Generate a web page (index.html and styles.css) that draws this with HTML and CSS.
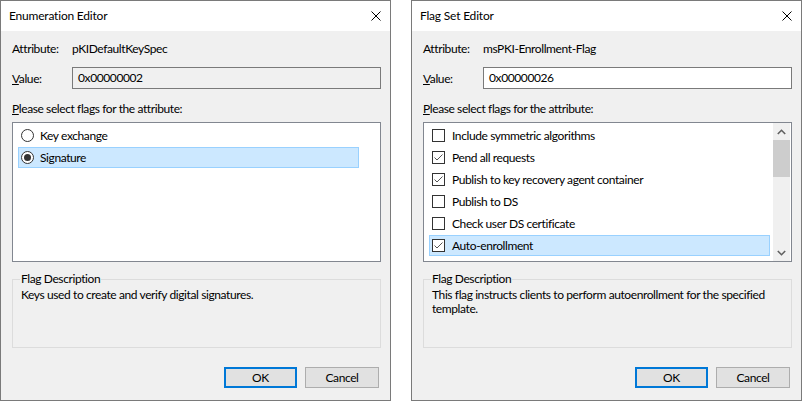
FILE: index.html
```html
<!DOCTYPE html>
<html>
<head>
<meta charset="utf-8">
<link rel="stylesheet" href="styles.css">
</head>
<body>
<div class="screen">
  <div class="dialog">
    <div class="titlebar">
      <span class="title">Enumeration Editor</span>
      <svg class="close" width="10" height="10" viewBox="0 0 10 10"><path d="M0.5 0.5 L9.5 9.5 M9.5 0.5 L0.5 9.5" stroke="#000" stroke-width="1" fill="none"/></svg>
    </div>
    <div class="body">
      <div class="attr"><span class="lbl">Attribute:</span><span>pKIDefaultKeySpec</span></div>
      <div class="value"><span class="lbl"><u>V</u>alue:</span><div class="input readonly">0x00000002</div></div>
      <div class="prompt"><u>P</u>lease select flags for the attribute:</div>
      <div class="list">
        <div class="items wide">
          <div class="item"><span class="radio"></span><span class="txt">Key exchange</span></div>
          <div class="item selected"><span class="radio checked"></span><span class="txt">Signature</span></div>
        </div>
      </div>
      <div class="group">
        <span class="legend">Flag Description</span>
        <p class="desc">Keys used to create and verify digital signatures.</p>
      </div>
      <div class="buttons">
        <button class="btn ok">OK</button>
        <button class="btn cancel">Cancel</button>
      </div>
    </div>
  </div>

  <div class="dialog">
    <div class="titlebar">
      <span class="title">Flag Set Editor</span>
      <svg class="close" width="10" height="10" viewBox="0 0 10 10"><path d="M0.5 0.5 L9.5 9.5 M9.5 0.5 L0.5 9.5" stroke="#000" stroke-width="1" fill="none"/></svg>
    </div>
    <div class="body">
      <div class="attr"><span class="lbl">Attribute:</span><span>msPKI-Enrollment-Flag</span></div>
      <div class="value"><span class="lbl"><u>V</u>alue:</span><div class="input">0x00000026</div></div>
      <div class="prompt"><u>P</u>lease select flags for the attribute:</div>
      <div class="list">
        <div class="items">
          <div class="item"><span class="check"></span><span class="txt cb">Include symmetric algorithms</span></div>
          <div class="item"><span class="check on"><svg width="11" height="11" viewBox="0 0 11 11"><path d="M1.5 5.5 L4 8 L9.5 2.5" stroke="#555" stroke-width="1" fill="none"/></svg></span><span class="txt cb">Pend all requests</span></div>
          <div class="item"><span class="check on"><svg width="11" height="11" viewBox="0 0 11 11"><path d="M1.5 5.5 L4 8 L9.5 2.5" stroke="#555" stroke-width="1" fill="none"/></svg></span><span class="txt cb">Publish to key recovery agent container</span></div>
          <div class="item"><span class="check"></span><span class="txt cb">Publish to DS</span></div>
          <div class="item"><span class="check"></span><span class="txt cb">Check user DS certificate</span></div>
          <div class="item selected"><span class="check on"><svg width="11" height="11" viewBox="0 0 11 11"><path d="M1.5 5.5 L4 8 L9.5 2.5" stroke="#555" stroke-width="1" fill="none"/></svg></span><span class="txt cb">Auto-enrollment</span></div>
        </div>
        <div class="scroll">
          <div class="arrow"><svg width="9" height="6" viewBox="0 0 9 6"><path d="M0.8 5 L4.5 1.3 L8.2 5" stroke="#606060" stroke-width="1.6" fill="none"/></svg></div>
          <div class="thumb"></div>
          <div class="track"></div>
          <div class="arrow"><svg width="9" height="6" viewBox="0 0 9 6"><path d="M0.8 1 L4.5 4.7 L8.2 1" stroke="#606060" stroke-width="1.6" fill="none"/></svg></div>
        </div>
      </div>
      <div class="group">
        <span class="legend">Flag Description</span>
        <p class="desc">This flag instructs clients to perform autoenrollment for the specified<br>template.</p>
      </div>
      <div class="buttons">
        <button class="btn ok">OK</button>
        <button class="btn cancel">Cancel</button>
      </div>
    </div>
  </div>
</div>
</body>
</html>
```

FILE: styles.css
```css
* { box-sizing: border-box; }

body {
  margin: 0;
  background: #ffffff;
  font-family: "Lato", "Noto Sans", sans-serif;
  font-size: 12px;
  letter-spacing: -0.4px;
  color: #000;
}

.screen {
  display: flex;
  gap: 20px;
  width: 802px;
  height: 401px;
}

.dialog {
  width: 391px;
  height: 401px;
  border: 1px solid #7a7a7a;
  background: #f0f0f0;
  display: flex;
  flex-direction: column;
}

.titlebar {
  height: 30px;
  background: #ffffff;
  display: flex;
  align-items: center;
  justify-content: space-between;
  padding: 0 9px 0 8px;
}

.title {
  line-height: 30px;
  letter-spacing: -0.2px;
}

.close {
  display: block;
}

.body {
  padding: 9px 9px 0 11px;
  display: flex;
  flex-direction: column;
}

.attr {
  height: 18px;
  line-height: 18px;
  display: flex;
}

.lbl {
  width: 60px;
  flex: none;
}

.value {
  margin-top: 9px;
  height: 22px;
  display: flex;
  align-items: center;
}

.input {
  flex: 1;
  height: 22px;
  border: 1px solid #7a7a7a;
  background: #ffffff;
  padding-left: 5px;
  line-height: 20px;
}

.input.readonly {
  background: #f0f0f0;
}

.prompt {
  margin-top: 11px;
  height: 18px;
  line-height: 18px;
}

.list {
  margin-top: 4px;
  height: 140px;
  border: 1px solid #828790;
  background: #ffffff;
  display: flex;
}

.items {
  flex: 1;
  padding: 2px 3px 0 5px;
}

.items.wide {
  padding-right: 21px;
}

.item {
  height: 21px;
  margin-bottom: 1px;
  display: flex;
  align-items: center;
  border: 1px solid transparent;
  padding-left: 2px;
}

.item.selected {
  background: #cce8ff;
  border-color: #99d1ff;
}

.radio {
  width: 13px;
  height: 13px;
  border: 1px solid #333333;
  border-radius: 50%;
  background: #ffffff;
  flex: none;
  display: flex;
  align-items: center;
  justify-content: center;
}

.radio.checked::after {
  content: "";
  width: 7px;
  height: 7px;
  border-radius: 50%;
  background: #333333;
}

.check {
  width: 13px;
  height: 13px;
  border: 1px solid #333333;
  background: #ffffff;
  flex: none;
  display: flex;
}

.check svg {
  display: block;
}

.txt {
  margin-left: 6px;
  line-height: 18px;
  white-space: nowrap;
}

.txt.cb {
  margin-left: 7px;
}

.scroll {
  width: 17px;
  background: #f0f0f0;
  display: flex;
  flex-direction: column;
  margin-right: 1px;
}

.arrow {
  height: 17px;
  display: flex;
  align-items: center;
  justify-content: center;
}

.thumb {
  height: 37px;
  background: #cdcdcd;
}

.track {
  flex: 1;
}

.group {
  position: relative;
  margin-top: 17px;
  height: 69px;
  border: 1px solid #dcdcdc;
  padding: 8px 8px 0 8px;
}

.legend {
  position: absolute;
  top: -8px;
  left: 7px;
  padding: 0 1px;
  background: #f0f0f0;
  line-height: 14px;
}

.desc {
  margin: 0;
  line-height: 14px;
  white-space: nowrap;
}

.buttons {
  margin-top: 19px;
  display: flex;
  justify-content: flex-end;
  gap: 8px;
  padding-right: 2px;
}

.btn {
  height: 21px;
  background: #e1e1e1;
  border: 1px solid #adadad;
  font-family: inherit;
  font-size: 12px;
  letter-spacing: inherit;
  color: #000;
  padding: 0;
  margin: 0;
}

.btn.ok {
  width: 73px;
  border: 2px solid #0078d7;
}

.btn.cancel {
  width: 74px;
}
```
